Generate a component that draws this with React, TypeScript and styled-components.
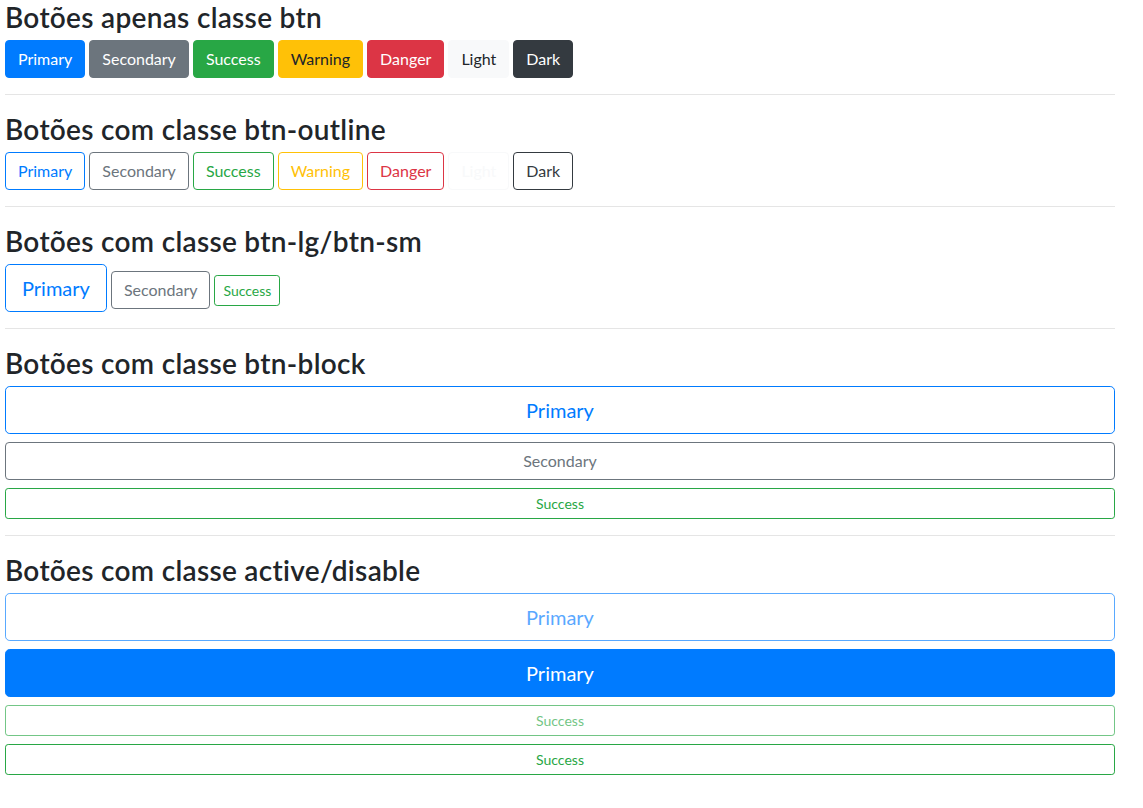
import React from "react";
import styled, { createGlobalStyle, css } from "styled-components";

const GlobalStyle = createGlobalStyle`
  html, body {
    margin: 0;
    padding: 0;
    background: #fff;
  }
  body {
    font-family: "Segoe UI", Lato, "Liberation Sans", Arial, sans-serif;
    color: #212529;
    font-size: 16px;
    line-height: 1.5;
  }
  * { box-sizing: border-box; }
`;

type Variant = "primary" | "secondary" | "success" | "warning" | "danger" | "light" | "dark";
type Size = "lg" | "md" | "sm";

const palette: Record<Variant, { bg: string; fg: string }> = {
  primary: { bg: "#007bff", fg: "#fff" },
  secondary: { bg: "#6c757d", fg: "#fff" },
  success: { bg: "#28a745", fg: "#fff" },
  warning: { bg: "#ffc107", fg: "#212529" },
  danger: { bg: "#dc3545", fg: "#fff" },
  light: { bg: "#f8f9fa", fg: "#212529" },
  dark: { bg: "#343a40", fg: "#fff" },
};

const sizes: Record<Size, { pad: string; font: number; radius: string }> = {
  lg: { pad: "8px 16px", font: 20, radius: "4.8px" },
  md: { pad: "6px 12px", font: 16, radius: "4px" },
  sm: { pad: "4px 8px", font: 14, radius: "3.2px" },
};

const Page = styled.div`
  width: 1120px;
  padding: 0 5px;
`;

const Section = styled.section`
  &:first-child h3 {
    margin-top: -1px;
  }
`;

const Title = styled.h3`
  font-size: 28px;
  font-weight: 600;
  line-height: 1.2;
  letter-spacing: 0.3px;
  margin: 0 0 5.4px;
  padding-top: 2px;
  color: #212529;
`;

const Divider = styled.hr`
  margin: 16px 0;
  border: 0;
  border-top: 1px solid rgba(0, 0, 0, 0.1);
  height: 0;
`;

const Row = styled.div`
  display: flex;
  align-items: baseline;
  gap: 4px;
`;

const Stack = styled.div`
  display: flex;
  flex-direction: column;
  gap: 8px;
`;

const Btn = styled.button<{
  $variant: Variant;
  $outline?: boolean;
  $size?: Size;
  $block?: boolean;
  $active?: boolean;
}>`
  display: ${(p) => (p.$block ? "block" : "inline-block")};
  width: ${(p) => (p.$block ? "100%" : "auto")};
  font-family: inherit;
  font-weight: 400;
  text-align: center;
  white-space: nowrap;
  border: 1px solid ${(p) => palette[p.$variant].bg};
  ${(p) => {
    const s = sizes[p.$size || "md"];
    return css`
      padding: ${s.pad};
      font-size: ${s.font}px;
      line-height: 1.5;
      border-radius: ${s.radius};
    `;
  }}
  ${(p) =>
    p.$outline && !p.$active
      ? css`
          background: transparent;
          color: ${palette[p.$variant].bg};
        `
      : css`
          background: ${palette[p.$variant].bg};
          color: ${palette[p.$variant].fg};
        `}
  margin: 0;
  cursor: pointer;
  &:disabled {
    opacity: 0.65;
    cursor: default;
  }
`;

const variants: { v: Variant; label: string }[] = [
  { v: "primary", label: "Primary" },
  { v: "secondary", label: "Secondary" },
  { v: "success", label: "Success" },
  { v: "warning", label: "Warning" },
  { v: "danger", label: "Danger" },
  { v: "light", label: "Light" },
  { v: "dark", label: "Dark" },
];

export default function App() {
  return (
    <>
      <GlobalStyle />
      <Page>
        <Section>
          <Title>Botões apenas classe btn</Title>
          <Row>
            {variants.map((b) => (
              <Btn key={b.v} $variant={b.v}>
                {b.label}
              </Btn>
            ))}
          </Row>
        </Section>
        <Divider />
        <Section>
          <Title>Botões com classe btn-outline</Title>
          <Row>
            {variants.map((b) => (
              <Btn key={b.v} $variant={b.v} $outline>
                {b.label}
              </Btn>
            ))}
          </Row>
        </Section>
        <Divider />
        <Section>
          <Title>Botões com classe btn-lg/btn-sm</Title>
          <Row>
            <Btn $variant="primary" $outline $size="lg">Primary</Btn>
            <Btn $variant="secondary" $outline>Secondary</Btn>
            <Btn $variant="success" $outline $size="sm">Success</Btn>
          </Row>
        </Section>
        <Divider />
        <Section>
          <Title>Botões com classe btn-block</Title>
          <Stack>
            <Btn $variant="primary" $outline $size="lg" $block>Primary</Btn>
            <Btn $variant="secondary" $outline $block>Secondary</Btn>
            <Btn $variant="success" $outline $size="sm" $block>Success</Btn>
          </Stack>
        </Section>
        <Divider />
        <Section>
          <Title>Botões com classe active/disable</Title>
          <Stack>
            <Btn $variant="primary" $outline $size="lg" $block disabled>Primary</Btn>
            <Btn $variant="primary" $outline $size="lg" $block $active>Primary</Btn>
            <Btn $variant="success" $outline $size="sm" $block disabled>Success</Btn>
            <Btn $variant="success" $outline $size="sm" $block>Success</Btn>
          </Stack>
        </Section>
      </Page>
    </>
  );
}
